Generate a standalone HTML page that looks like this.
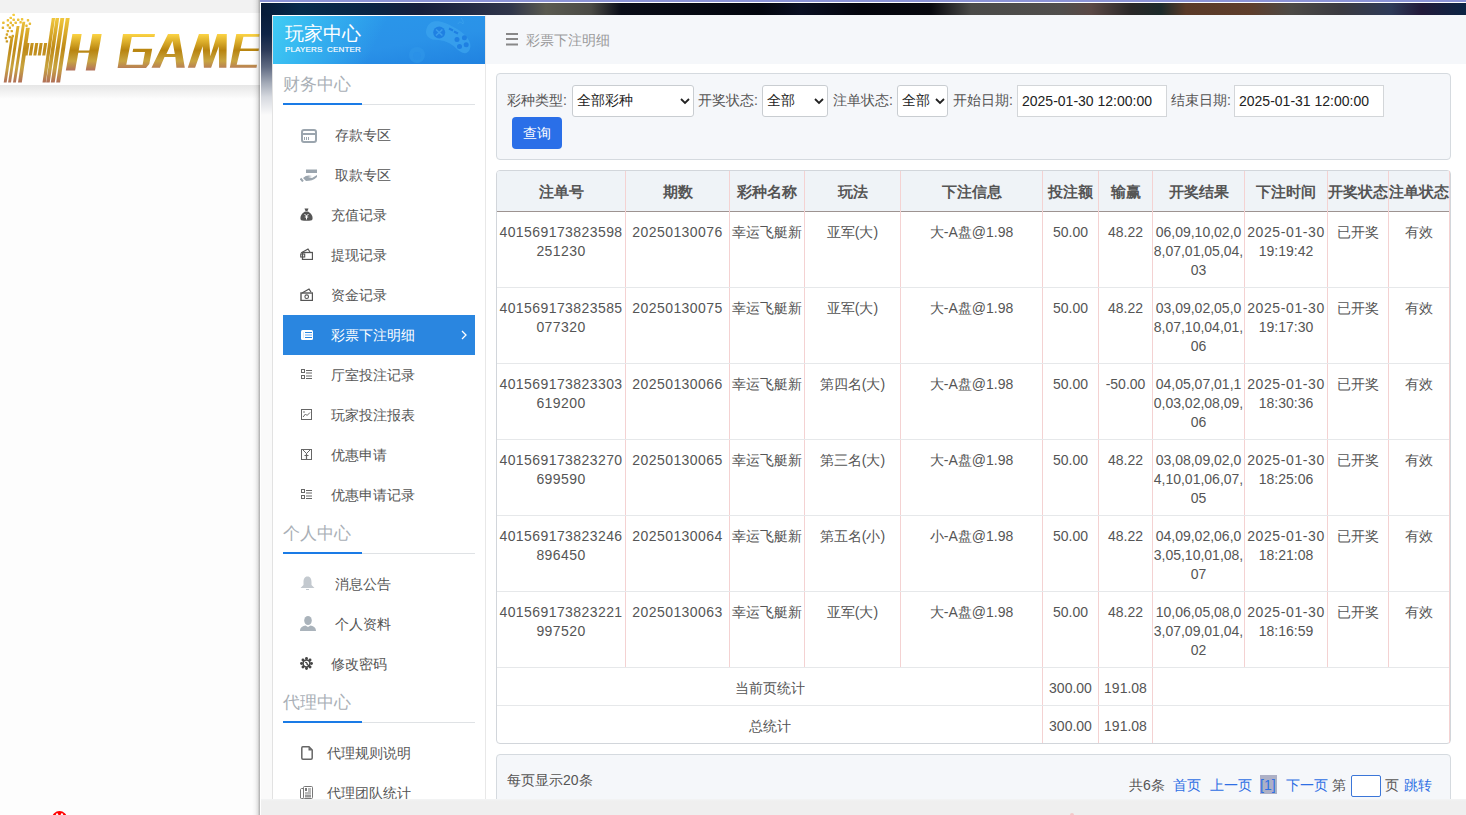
<!DOCTYPE html><html><head><meta charset="utf-8"><style>
*{box-sizing:border-box}
html,body{margin:0;padding:0}
body{width:1466px;height:815px;overflow:hidden;position:relative;background:#fdfdfd;font-family:'Liberation Sans',sans-serif;font-size:14px;color:#555}
.ab{position:absolute}
.t{position:absolute;white-space:nowrap;line-height:20px}
.sec{position:absolute;left:283px;font-size:17px;color:#a9afb6;line-height:24px;white-space:nowrap}
.ul{position:absolute;left:283px;width:192px;height:1px;background:#dfe2e5}
.ulb{position:absolute;left:283px;width:79px;height:2px;background:#1a7be6}
.it{position:absolute;font-size:14px;color:#555;line-height:20px;white-space:nowrap}
.lab{position:absolute;top:90px;line-height:20px;color:#555;white-space:nowrap}
.sel{position:absolute;top:85px;height:32px;background:#fff;border:1px solid #c9cdd1;border-radius:3px}
.sel span{position:absolute;left:4px;top:4px;line-height:20px;color:#222}
.sel svg{position:absolute;top:12px}
.inp{position:absolute;top:85px;height:32px;background:#fff;border:1px solid #d3d6d9}
.inp span{position:absolute;left:4px;top:4.5px;line-height:20px;color:#222}
.cell{position:absolute;text-align:center;line-height:19px;color:#555;white-space:nowrap}
.hd{position:absolute;text-align:center;line-height:20px;color:#555;font-weight:bold;white-space:nowrap;font-size:15px}
.vl{position:absolute;width:1px;background:#f4d2d2}
.hl{position:absolute;height:1px;background:#e6e8ea}
.pg{position:absolute;top:775px;line-height:20px;white-space:nowrap}
.bl{color:#2e6fe4}
.dg{letter-spacing:0.42px}
.dt{letter-spacing:0.6px}
</style></head><body>

<div class="ab" style="left:0;top:0;width:260px;height:13px;background:#f2f2f2"></div>
<div class="ab" style="left:0;top:85px;width:260px;height:14px;background:linear-gradient(#e6e6e6,#fdfdfd)"></div>
<div class="ab" style="left:0;top:13px;width:260px;height:72px;background:#fff"></div>
<svg class="ab" style="left:0;top:13px" width="260" height="72" viewBox="0 13 260 72">
<defs>
<linearGradient id="g1" x1="0" y1="14" x2="0" y2="83" gradientUnits="userSpaceOnUse">
<stop offset="0" stop-color="#f7cf42"/><stop offset="0.5" stop-color="#bf8a17"/><stop offset="0.78" stop-color="#c8a441"/><stop offset="1" stop-color="#b06e58"/></linearGradient>
<linearGradient id="g2" x1="0" y1="34" x2="0" y2="70" gradientUnits="userSpaceOnUse">
<stop offset="0" stop-color="#fcd444"/><stop offset="0.45" stop-color="#b8840f"/><stop offset="0.75" stop-color="#c8a541"/><stop offset="1" stop-color="#b3735a"/></linearGradient>
</defs>
<g fill="url(#g1)"><rect x="12.5" y="13.7" width="2.4" height="2.4" rx="0.6"/><rect x="9.6" y="16.7" width="2.4" height="2.4" rx="0.6"/><rect x="6.7" y="19.1" width="2.4" height="2.4" rx="0.6"/><rect x="12.5" y="18.6" width="2.4" height="2.4" rx="0.6"/><rect x="17.0" y="18.6" width="2.4" height="2.4" rx="0.6"/><rect x="20.9" y="18.1" width="2.4" height="2.4" rx="0.6"/><rect x="26.8" y="19.1" width="2.4" height="2.4" rx="0.6"/><rect x="2.2" y="21.6" width="2.4" height="2.4" rx="0.6"/><rect x="9.6" y="21.6" width="2.4" height="2.4" rx="0.6"/><rect x="14.5" y="21.6" width="2.4" height="2.4" rx="0.6"/><rect x="19.4" y="21.1" width="2.4" height="2.4" rx="0.6"/><rect x="28.7" y="22.5" width="2.4" height="2.4" rx="0.6"/><rect x="6.7" y="24.0" width="2.4" height="2.4" rx="0.6"/><rect x="11.6" y="24.0" width="2.4" height="2.4" rx="0.6"/><rect x="1.7" y="26.5" width="2.4" height="2.4" rx="0.6"/><rect x="8.6" y="26.5" width="2.4" height="2.4" rx="0.6"/><rect x="25.3" y="24.5" width="2.4" height="2.4" rx="0.6"/><rect x="6.7" y="29.9" width="2.4" height="2.4" rx="0.6"/><rect x="10.6" y="29.9" width="2.4" height="2.4" rx="0.6"/><rect x="5.7" y="33.3" width="2.4" height="2.4" rx="0.6"/><rect x="11.6" y="34.8" width="2.4" height="2.4" rx="0.6"/><rect x="4.7" y="36.8" width="2.4" height="2.4" rx="0.6"/><rect x="8.6" y="35.8" width="2.4" height="2.4" rx="0.6"/><rect x="5.7" y="40.2" width="2.4" height="2.4" rx="0.6"/><polygon points="10.6,36.5 13.5,36.5 6.6,82.6 3.7,82.6"/><polygon points="16.6,26 19.5,26 11.0,82.6 8.1,82.6"/><polygon points="22.4,21.8 25.3,21.8 15.9,82.6 13.0,82.6"/><polygon points="26.0,27.7 29.8,27.7 21.8,82.6 18.0,82.6"/><polygon points="51.8,17.9 55.1,17.9 45.8,82.6 42.5,82.6"/><polygon points="55.6,17.9 59.2,17.9 49.7,82.6 46.1,82.6"/><polygon points="60.4,17.9 64.3,17.9 54.7,82.6 50.8,82.6"/><polygon points="65.8,17.9 69.7,17.9 60.1,82.6 56.2,82.6"/><polygon points="26.4,42.9 29.5,42.9 27.6,55.6 24.5,55.6"/><polygon points="30.7,42.9 33.8,42.9 31.900000000000002,55.6 28.8,55.6"/><polygon points="35.199999999999996,42.9 38.3,42.9 36.4,55.6 33.3,55.6"/><polygon points="39.6,42.9 42.7,42.9 40.800000000000004,55.6 37.7,55.6"/><polygon points="44.1,42.9 47.2,42.9 45.300000000000004,55.6 42.2,55.6"/></g>
<g fill="url(#g2)" fill-rule="evenodd">
<polygon points="72.4,34 81.7,34 75.1,70.6 65.8,70.6"/>
<polygon points="92.4,34 101.7,34 95,70.6 85.7,70.6"/>
<polygon points="78,50.6 94,50.6 93.6,52.8 77.6,52.8"/>
<polygon points="123,34 155,34 154.5,37 131.8,37 126.3,64.8 142.6,64.8 145,52 132.6,52 133.2,48.8 152.2,48.8 149.3,64 146,67.9 117.6,67.9"/>
<path d="M168,34.1 L179,34.1 L184.8,67.7 L176.4,67.7 L175.4,57 L164.5,57 L159.9,67.7 L151.5,67.7 Z M172.5,41 L174.8,54 L166.4,54 Z"/>
<polygon points="198.9,34.1 208.8,34.1 210.4,56.3 217.2,34.1 226.8,34.1 226.4,67.7 219.1,67.7 218.8,46.3 211.1,67.7 203.9,67.7 202.7,46.3 195.1,67.7 187.8,67.7"/>
<polygon points="236.3,34.1 259.6,34.1 259.2,36.8 243.4,36.8 240.6,48.6 258.9,48.6 258.6,50.9 240,50.9 236.7,64.7 257,64.7 256.5,67.7 229.8,67.7"/>
</g>
</svg>
<div class="ab" style="left:52px;top:811px;width:15px;height:15px;border-radius:8px;background:#f00"></div>
<svg class="ab" style="left:52px;top:811px" width="15" height="15"><path d="M4.5 2.5 L7.5 7.5 M10.5 2.5 L7.5 7.5" stroke="#fff" stroke-width="2"/></svg>
<div class="ab" style="left:252px;top:0;width:8px;height:815px;background:linear-gradient(to right,rgba(0,0,0,0),rgba(0,0,0,0.03) 40%,rgba(0,0,0,0.1) 70%,rgba(0,0,0,0.32))"></div>
<div class="ab" style="left:260px;top:0;width:1206px;height:815px;background:#fff"></div>
<div class="ab" style="left:260px;top:0;width:1206px;height:2px;background:#8b93d6"></div>
<div class="ab" style="left:261px;top:3px;width:1205px;height:796px;background:#fafafa"></div>
<div class="ab" style="left:261px;top:3px;width:1205px;height:12px;background:linear-gradient(to right,#071a38 0px,#062a4a 40px,#0a2444 110px,#161e3c 160px,#30364a 250px,#5a5a50 285px,#4a4a45 330px,#0a0d18 360px,#03060e 500px,#0a0f22 540px,#04050d 600px,#08090f 670px,#4a4a48 710px,#504e4c 800px,#5a4845 830px,#2a2828 870px,#1c2a2a 900px,#5a3a28 925px,#5e3e2c 990px,#4c4a46 1030px,#3a3a40 1080px,#2e3a58 1130px,#221a3a 1160px,#0a2444 1205px)"></div>
<div class="ab" style="left:261px;top:15px;width:11px;height:100px;background:linear-gradient(#081c3a 0px,#0e2446 19px,#2c3a58 35px,#5f6a82 52px,#a3aab7 68px,#d6d9df 82px,#fafafa 100px)"></div>
<div class="ab" style="left:261px;top:799px;width:1205px;height:16px;background:#eeeeee"></div>
<div class="ab" style="left:272px;top:15px;width:214px;height:784px;background:#fff;border-left:1px solid #e2e2e2;border-right:1px solid #e8e8e8;border-top:1px solid #fff"></div>
<div class="ab" style="left:273px;top:16px;width:212px;height:48px;background:linear-gradient(170deg,#2a98ea 0%,#2a92e8 60%,#2082e0 100%);overflow:hidden">
<div class="ab" style="left:0;top:0;width:213px;height:48px;background:linear-gradient(115deg,#40ccf4 0px,#36b6f0 40px,rgba(42,150,234,0) 105px)"></div>
<svg class="ab" style="left:0;top:0" width="213" height="48" viewBox="0 0 213 48">
<g transform="rotate(24 176 21)">
<path d="M152 21 C152 10 165 9 176 10 C190 11 200 16 200 24 C200 31 193 31 186 28 C180 26 172 26 165 29 C157 32 152 28 152 21Z" fill="#3ba3ee" opacity="0.75"/>
</g>
<circle cx="166.2" cy="16.5" r="6" fill="#1f80e2"/>
<path d="M163 13.5 L169.4 19.5 M169.4 13.5 L163 19.5" stroke="#3a9cec" stroke-width="1.6"/>
<path d="M176 12.5 L180 14.5 M181 15.5 L185 17.5" stroke="#1f80e2" stroke-width="2.2"/>
<circle cx="191.4" cy="21.7" r="2.5" fill="#1f80e2"/><circle cx="184" cy="23.6" r="2.5" fill="#1f80e2"/>
<circle cx="193.2" cy="28.8" r="2.5" fill="#1f80e2"/><circle cx="186.5" cy="30.6" r="2.5" fill="#1f80e2"/>
<path d="M185 8 C186 5 188 6 190 8 C191 6 189 3 188 2" stroke="#3ba3ee" stroke-width="1" fill="none" opacity="0.8"/>
<circle cx="144" cy="39" r="8" fill="#3097ea" opacity="0.6"/><circle cx="144" cy="40" r="4" fill="#2a90e8" opacity="0.6"/>
</svg>
<div class="t" style="left:12px;top:6px;font-size:19px;line-height:23px;color:#fff">玩家中心</div>
<div class="t" style="left:12px;top:29px;font-size:8px;line-height:10px;color:#fff;letter-spacing:0.15px;-webkit-text-stroke:0.15px #fff">PLAYERS&nbsp; CENTER</div>
</div>
<div class="sec" style="top:73px">财务中心</div>
<div class="ul" style="top:104px"></div>
<div class="ulb" style="top:103px"></div>
<div class="sec" style="top:522px">个人中心</div>
<div class="ul" style="top:553px"></div>
<div class="ulb" style="top:552px"></div>
<div class="sec" style="top:691px">代理中心</div>
<div class="ul" style="top:722px"></div>
<div class="ulb" style="top:721px"></div>
<div class="ab" style="left:283px;top:315px;width:192px;height:40px;background:#2a86e0"></div>
<div class="it" style="left:335px;top:125px;color:#555">存款专区</div>
<svg class="ab" style="left:301px;top:129px" width="16" height="14" viewBox="0 0 16 14"><rect x="1" y="1" width="14" height="12" rx="2" fill="none" stroke="#9ba5ae" stroke-width="2"/><rect x="1" y="4" width="14" height="2" fill="#9ba5ae"/><rect x="3" y="8" width="1" height="3" fill="#9ba5ae"/><rect x="5" y="8" width="1" height="3" fill="#9ba5ae"/><rect x="7" y="8" width="1" height="3" fill="#9ba5ae"/></svg>
<div class="it" style="left:335px;top:165px;color:#555">取款专区</div>
<svg class="ab" style="left:300px;top:169px" width="18" height="13" viewBox="0 0 18 13"><rect x="6" y="0.5" width="11" height="3.5" fill="#9ba5ae"/><path d="M3 9 C6 6 9 6 12 7 L8 8 L12 9 L17 6 L17 8 C14 11 10 12 6 12 Z" fill="#9ba5ae"/><path d="M0.5 9.5 L3 12.5" stroke="#9ba5ae" stroke-width="2"/></svg>
<div class="it" style="left:331px;top:205px;color:#555">充值记录</div>
<svg class="ab" style="left:300px;top:208px" width="13" height="13" viewBox="0 0 13 13"><path d="M4.5 0.5 L8.5 0.5 L7.5 3 L5.5 3 Z" fill="#555"/><path d="M5 3.5 L8 3.5 C11 5 13 8 12.5 11 C12 12.5 11 12.8 6.5 12.8 C2 12.8 1 12.5 0.5 11 C0 8 2 5 5 3.5Z" fill="#555"/><path d="M4.5 6 L6.5 8 L8.5 6 M6.5 8 L6.5 11.5 M4.8 9 L8.2 9" stroke="#fff" stroke-width="1" fill="none"/></svg>
<div class="it" style="left:331px;top:245px;color:#555">提现记录</div>
<svg class="ab" style="left:300px;top:248px" width="13" height="12" viewBox="0 0 13 12"><path d="M1 5 L8 1 L10 4" stroke="#555" stroke-width="1.2" fill="none"/><rect x="2.5" y="4.5" width="10" height="7" fill="none" stroke="#555" stroke-width="1.3"/><rect x="0.7" y="6" width="4" height="3" fill="none" stroke="#555" stroke-width="1.1"/></svg>
<div class="it" style="left:331px;top:285px;color:#555">资金记录</div>
<svg class="ab" style="left:300px;top:288px" width="13" height="13" viewBox="0 0 13 13"><path d="M2 5 L9 1 L11 4" stroke="#555" stroke-width="1.3" fill="none"/><rect x="1" y="5" width="11.5" height="7.5" fill="none" stroke="#555" stroke-width="1.4"/><circle cx="6.7" cy="8.7" r="1.8" fill="none" stroke="#555" stroke-width="1.1"/></svg>
<div class="it" style="left:331px;top:325px;color:#fff">彩票下注明细</div>
<svg class="ab" style="left:301px;top:330px" width="12" height="10" viewBox="0 0 12 10"><rect x="0" y="0" width="12" height="10" rx="1.5" fill="#fff"/><rect x="4" y="2" width="7" height="1" fill="#2a86e0"/><rect x="4" y="4.5" width="7" height="1" fill="#6aaaf0"/><rect x="4" y="7" width="7" height="1" fill="#2a86e0"/><rect x="2" y="2" width="1" height="6" fill="#d8e8fa"/></svg>
<div class="it" style="left:331px;top:365px;color:#555">厅室投注记录</div>
<svg class="ab" style="left:301px;top:369px" width="11" height="11" viewBox="0 0 11 11"><rect x="0.5" y="0.5" width="3" height="3" fill="none" stroke="#666" stroke-width="1"/><rect x="0.5" y="6.5" width="3" height="3" fill="none" stroke="#666" stroke-width="1"/><rect x="5" y="1" width="6" height="1" fill="#666"/><rect x="5" y="3.5" width="6" height="1" fill="#666"/><rect x="5" y="6.5" width="6" height="1" fill="#666"/><rect x="5" y="9" width="6" height="1" fill="#666"/></svg>
<div class="it" style="left:331px;top:405px;color:#555">玩家投注报表</div>
<svg class="ab" style="left:301px;top:409px" width="11" height="11" viewBox="0 0 11 11"><rect x="0.5" y="0.5" width="10" height="10" fill="none" stroke="#666" stroke-width="1"/><path d="M2 8 L4.5 5 L6 6.5 L9 3.5" stroke="#666" stroke-width="1" fill="none"/><circle cx="3" cy="3" r="0.8" fill="#666"/></svg>
<div class="it" style="left:331px;top:445px;color:#555">优惠申请</div>
<svg class="ab" style="left:301px;top:449px" width="11" height="11" viewBox="0 0 11 11"><rect x="0.5" y="0.5" width="10" height="10" fill="none" stroke="#666" stroke-width="1"/><path d="M2 1 L5.5 4.5 L9 1" stroke="#666" stroke-width="1" fill="none"/><path d="M5.5 4.5 L5.5 10 M3.5 6.5 L7.5 6.5" stroke="#666" stroke-width="1.2"/></svg>
<div class="it" style="left:331px;top:485px;color:#555">优惠申请记录</div>
<svg class="ab" style="left:301px;top:489px" width="11" height="11" viewBox="0 0 11 11"><rect x="0.5" y="0.5" width="3" height="3" fill="none" stroke="#666" stroke-width="1"/><rect x="0.5" y="6.5" width="3" height="3" fill="none" stroke="#666" stroke-width="1"/><rect x="5" y="1" width="6" height="1" fill="#666"/><rect x="5" y="3.5" width="6" height="1" fill="#666"/><rect x="5" y="6.5" width="6" height="1" fill="#666"/><rect x="5" y="9" width="6" height="1" fill="#666"/></svg>
<div class="it" style="left:335px;top:574px;color:#555">消息公告</div>
<svg class="ab" style="left:300px;top:576px" width="15" height="14" viewBox="0 0 15 14"><path d="M7.5 0.5 C10.5 0.5 11.5 3 11.5 6 L11.5 9 L14.5 12 L0.5 12 L3.5 9 L3.5 6 C3.5 3 4.5 0.5 7.5 0.5Z" fill="#c3c9cf"/><rect x="6" y="13" width="3" height="1" fill="#c3c9cf"/></svg>
<div class="it" style="left:335px;top:614px;color:#555">个人资料</div>
<svg class="ab" style="left:300px;top:616px" width="16" height="15" viewBox="0 0 16 15"><ellipse cx="8" cy="4.5" rx="3.8" ry="4.5" fill="#aab3bb"/><path d="M0 15 C0 11 3 10 5.5 9.5 L8 11 L10.5 9.5 C13 10 16 11 16 15Z" fill="#aab3bb"/></svg>
<div class="it" style="left:331px;top:654px;color:#555">修改密码</div>
<svg class="ab" style="left:300px;top:657px" width="13" height="13" viewBox="0 0 13 13"><circle cx="11.50" cy="6.50" r="1.45" fill="#444"/><circle cx="10.04" cy="10.04" r="1.45" fill="#444"/><circle cx="6.50" cy="11.50" r="1.45" fill="#444"/><circle cx="2.96" cy="10.04" r="1.45" fill="#444"/><circle cx="1.50" cy="6.50" r="1.45" fill="#444"/><circle cx="2.96" cy="2.96" r="1.45" fill="#444"/><circle cx="6.50" cy="1.50" r="1.45" fill="#444"/><circle cx="10.04" cy="2.96" r="1.45" fill="#444"/><circle cx="6.5" cy="6.5" r="3.4" fill="#fff" stroke="#444" stroke-width="1.5"/><path d="M5.2 5.6 C6.2 5 7.4 6 7 7 L9.3 9.3" stroke="#444" stroke-width="1.3" fill="none"/></svg>
<div class="it" style="left:327px;top:743px;color:#555">代理规则说明</div>
<svg class="ab" style="left:301px;top:746px" width="12" height="14" viewBox="0 0 12 14"><path d="M1.8 0.8 L8 0.8 L11.2 4 L11.2 12 C11.2 12.8 10.8 13.2 10 13.2 L2 13.2 C1.2 13.2 0.8 12.8 0.8 12 L0.8 2 C0.8 1.2 1.2 0.8 1.8 0.8Z" fill="none" stroke="#666" stroke-width="1.5"/><path d="M7.5 1 L11 4.5 L7.5 4.5Z" fill="#666"/></svg>
<div class="it" style="left:327px;top:783px;color:#555">代理团队统计</div>
<svg class="ab" style="left:300px;top:786px" width="13" height="13" viewBox="0 0 13 13"><rect x="3.5" y="0.5" width="9" height="12" rx="1" fill="none" stroke="#777" stroke-width="1"/><path d="M3.5 2.5 L1.5 2.5 C1 2.5 0.5 3 0.5 3.5 L0.5 12 C0.5 12.5 1 12.5 1.5 12.5 L3.5 12.5" fill="none" stroke="#777" stroke-width="1"/><rect x="5" y="2" width="2" height="3" fill="#777"/><rect x="8" y="2.5" width="3" height="1" fill="#777"/><rect x="8" y="4.5" width="3" height="1" fill="#777"/><rect x="5" y="6.5" width="6" height="1" fill="#777"/><rect x="5" y="8.5" width="6" height="3" fill="#999"/></svg>
<svg class="ab" style="left:460px;top:330px" width="8" height="10"><path d="M2 1 L6 5 L2 9" stroke="#fff" stroke-width="1.3" fill="none"/></svg>
<div class="ab" style="left:486px;top:15px;width:980px;height:49px;background:#f5f7fa"></div>
<div class="ab" style="left:486px;top:64px;width:980px;height:735px;background:#fff"></div>
<svg class="ab" style="left:506px;top:33px" width="12" height="13"><rect x="0" y="0" width="12" height="2" fill="#888"/><rect x="0" y="5" width="12" height="2" fill="#888"/><rect x="0" y="10.5" width="12" height="2" fill="#888"/></svg>
<div class="t" style="left:526px;top:30px;color:#9a9a9a">彩票下注明细</div>
<div class="ab" style="left:496px;top:73px;width:955px;height:87px;background:#f5f7fa;border:1px solid #d5dadf;border-radius:4px"></div>
<div class="lab" style="left:507px">彩种类型:</div>
<div class="sel" style="left:572px;width:122px"><span>全部彩种</span><svg style="left:107px" width="10" height="7" viewBox="0 0 10 7"><path d="M1 1 L5 5 L9 1" stroke="#222" stroke-width="1.8" fill="none"/></svg></div>
<div class="lab" style="left:698px">开奖状态:</div>
<div class="sel" style="left:762px;width:66px"><span>全部</span><svg style="left:51px" width="10" height="7" viewBox="0 0 10 7"><path d="M1 1 L5 5 L9 1" stroke="#222" stroke-width="1.8" fill="none"/></svg></div>
<div class="lab" style="left:833px">注单状态:</div>
<div class="sel" style="left:897px;width:51px"><span>全部</span><svg style="left:37px" width="10" height="7" viewBox="0 0 10 7"><path d="M1 1 L5 5 L9 1" stroke="#222" stroke-width="1.8" fill="none"/></svg></div>
<div class="lab" style="left:953px">开始日期:</div>
<div class="inp" style="left:1017px;width:150px"><span>2025-01-30 12:00:00</span></div>
<div class="lab" style="left:1171px">结束日期:</div>
<div class="inp" style="left:1234px;width:150px"><span>2025-01-31 12:00:00</span></div>
<div class="ab" style="left:512px;top:117px;width:50px;height:32px;background:#2a6fe8;border-radius:4px;color:#fff;text-align:center;line-height:32px">查询</div>
<div class="ab" style="left:496px;top:170px;width:955px;height:574px;background:#fff;border:1px solid #d2d6db;border-radius:4px"></div>
<div class="ab" style="left:497px;top:171px;width:953px;height:40px;background:#eff3f7;border-radius:3px 3px 0 0"></div>
<div class="ab" style="left:497px;top:211px;width:953px;height:1px;background:#9d9391"></div>
<div class="vl" style="left:625px;top:171px;height:497px"></div>
<div class="vl" style="left:729px;top:171px;height:497px"></div>
<div class="vl" style="left:804px;top:171px;height:497px"></div>
<div class="vl" style="left:900px;top:171px;height:497px"></div>
<div class="vl" style="left:1042px;top:171px;height:497px"></div>
<div class="vl" style="left:1098px;top:171px;height:497px"></div>
<div class="vl" style="left:1152px;top:171px;height:497px"></div>
<div class="vl" style="left:1244px;top:171px;height:497px"></div>
<div class="vl" style="left:1327px;top:171px;height:497px"></div>
<div class="vl" style="left:1388px;top:171px;height:497px"></div>
<div class="vl" style="left:1449px;top:171px;height:497px"></div>
<div class="vl" style="left:1042px;top:668px;height:75px"></div>
<div class="vl" style="left:1098px;top:668px;height:75px"></div>
<div class="vl" style="left:1152px;top:668px;height:75px"></div>
<div class="vl" style="left:1449px;top:668px;height:75px"></div>
<div class="hl" style="left:497px;top:287px;width:952px"></div>
<div class="hl" style="left:497px;top:363px;width:952px"></div>
<div class="hl" style="left:497px;top:439px;width:952px"></div>
<div class="hl" style="left:497px;top:515px;width:952px"></div>
<div class="hl" style="left:497px;top:591px;width:952px"></div>
<div class="hl" style="left:497px;top:667px;width:952px"></div>
<div class="hl" style="left:497px;top:705px;width:952px"></div>
<div class="hd" style="left:497px;top:182px;width:128px">注单号</div>
<div class="hd" style="left:626px;top:182px;width:103px">期数</div>
<div class="hd" style="left:730px;top:182px;width:74px">彩种名称</div>
<div class="hd" style="left:805px;top:182px;width:95px">玩法</div>
<div class="hd" style="left:901px;top:182px;width:141px">下注信息</div>
<div class="hd" style="left:1043px;top:182px;width:55px">投注额</div>
<div class="hd" style="left:1099px;top:182px;width:53px">输赢</div>
<div class="hd" style="left:1153px;top:182px;width:91px">开奖结果</div>
<div class="hd" style="left:1245px;top:182px;width:82px">下注时间</div>
<div class="hd" style="left:1328px;top:182px;width:60px">开奖状态</div>
<div class="hd" style="left:1389px;top:182px;width:60px">注单状态</div>
<div class="cell" style="left:497px;top:223px;width:128px"><span class="dg">401569173823598</span><br><span class="dg">251230</span></div>
<div class="cell" style="left:626px;top:223px;width:103px"><span class="dg">20250130076</span></div>
<div class="cell" style="left:730px;top:223px;width:74px">幸运飞艇新</div>
<div class="cell" style="left:805px;top:223px;width:95px">亚军(大)</div>
<div class="cell" style="left:901px;top:223px;width:141px">大-A盘@1.98</div>
<div class="cell" style="left:1043px;top:223px;width:55px">50.00</div>
<div class="cell" style="left:1099px;top:223px;width:53px">48.22</div>
<div class="cell" style="left:1153px;top:223px;width:91px">06,09,10,02,0<br>8,07,01,05,04,<br>03</div>
<div class="cell" style="left:1245px;top:223px;width:82px"><span class="dt">2025-01-30</span><br>19:19:42</div>
<div class="cell" style="left:1328px;top:223px;width:60px">已开奖</div>
<div class="cell" style="left:1389px;top:223px;width:60px">有效</div>
<div class="cell" style="left:497px;top:299px;width:128px"><span class="dg">401569173823585</span><br><span class="dg">077320</span></div>
<div class="cell" style="left:626px;top:299px;width:103px"><span class="dg">20250130075</span></div>
<div class="cell" style="left:730px;top:299px;width:74px">幸运飞艇新</div>
<div class="cell" style="left:805px;top:299px;width:95px">亚军(大)</div>
<div class="cell" style="left:901px;top:299px;width:141px">大-A盘@1.98</div>
<div class="cell" style="left:1043px;top:299px;width:55px">50.00</div>
<div class="cell" style="left:1099px;top:299px;width:53px">48.22</div>
<div class="cell" style="left:1153px;top:299px;width:91px">03,09,02,05,0<br>8,07,10,04,01,<br>06</div>
<div class="cell" style="left:1245px;top:299px;width:82px"><span class="dt">2025-01-30</span><br>19:17:30</div>
<div class="cell" style="left:1328px;top:299px;width:60px">已开奖</div>
<div class="cell" style="left:1389px;top:299px;width:60px">有效</div>
<div class="cell" style="left:497px;top:375px;width:128px"><span class="dg">401569173823303</span><br><span class="dg">619200</span></div>
<div class="cell" style="left:626px;top:375px;width:103px"><span class="dg">20250130066</span></div>
<div class="cell" style="left:730px;top:375px;width:74px">幸运飞艇新</div>
<div class="cell" style="left:805px;top:375px;width:95px">第四名(大)</div>
<div class="cell" style="left:901px;top:375px;width:141px">大-A盘@1.98</div>
<div class="cell" style="left:1043px;top:375px;width:55px">50.00</div>
<div class="cell" style="left:1099px;top:375px;width:53px">-50.00</div>
<div class="cell" style="left:1153px;top:375px;width:91px">04,05,07,01,1<br>0,03,02,08,09,<br>06</div>
<div class="cell" style="left:1245px;top:375px;width:82px"><span class="dt">2025-01-30</span><br>18:30:36</div>
<div class="cell" style="left:1328px;top:375px;width:60px">已开奖</div>
<div class="cell" style="left:1389px;top:375px;width:60px">有效</div>
<div class="cell" style="left:497px;top:451px;width:128px"><span class="dg">401569173823270</span><br><span class="dg">699590</span></div>
<div class="cell" style="left:626px;top:451px;width:103px"><span class="dg">20250130065</span></div>
<div class="cell" style="left:730px;top:451px;width:74px">幸运飞艇新</div>
<div class="cell" style="left:805px;top:451px;width:95px">第三名(大)</div>
<div class="cell" style="left:901px;top:451px;width:141px">大-A盘@1.98</div>
<div class="cell" style="left:1043px;top:451px;width:55px">50.00</div>
<div class="cell" style="left:1099px;top:451px;width:53px">48.22</div>
<div class="cell" style="left:1153px;top:451px;width:91px">03,08,09,02,0<br>4,10,01,06,07,<br>05</div>
<div class="cell" style="left:1245px;top:451px;width:82px"><span class="dt">2025-01-30</span><br>18:25:06</div>
<div class="cell" style="left:1328px;top:451px;width:60px">已开奖</div>
<div class="cell" style="left:1389px;top:451px;width:60px">有效</div>
<div class="cell" style="left:497px;top:527px;width:128px"><span class="dg">401569173823246</span><br><span class="dg">896450</span></div>
<div class="cell" style="left:626px;top:527px;width:103px"><span class="dg">20250130064</span></div>
<div class="cell" style="left:730px;top:527px;width:74px">幸运飞艇新</div>
<div class="cell" style="left:805px;top:527px;width:95px">第五名(小)</div>
<div class="cell" style="left:901px;top:527px;width:141px">小-A盘@1.98</div>
<div class="cell" style="left:1043px;top:527px;width:55px">50.00</div>
<div class="cell" style="left:1099px;top:527px;width:53px">48.22</div>
<div class="cell" style="left:1153px;top:527px;width:91px">04,09,02,06,0<br>3,05,10,01,08,<br>07</div>
<div class="cell" style="left:1245px;top:527px;width:82px"><span class="dt">2025-01-30</span><br>18:21:08</div>
<div class="cell" style="left:1328px;top:527px;width:60px">已开奖</div>
<div class="cell" style="left:1389px;top:527px;width:60px">有效</div>
<div class="cell" style="left:497px;top:603px;width:128px"><span class="dg">401569173823221</span><br><span class="dg">997520</span></div>
<div class="cell" style="left:626px;top:603px;width:103px"><span class="dg">20250130063</span></div>
<div class="cell" style="left:730px;top:603px;width:74px">幸运飞艇新</div>
<div class="cell" style="left:805px;top:603px;width:95px">亚军(大)</div>
<div class="cell" style="left:901px;top:603px;width:141px">大-A盘@1.98</div>
<div class="cell" style="left:1043px;top:603px;width:55px">50.00</div>
<div class="cell" style="left:1099px;top:603px;width:53px">48.22</div>
<div class="cell" style="left:1153px;top:603px;width:91px">10,06,05,08,0<br>3,07,09,01,04,<br>02</div>
<div class="cell" style="left:1245px;top:603px;width:82px"><span class="dt">2025-01-30</span><br>18:16:59</div>
<div class="cell" style="left:1328px;top:603px;width:60px">已开奖</div>
<div class="cell" style="left:1389px;top:603px;width:60px">有效</div>
<div class="cell" style="left:497px;top:679px;width:545px">当前页统计</div>
<div class="cell" style="left:1043px;top:679px;width:55px">300.00</div>
<div class="cell" style="left:1099px;top:679px;width:53px">191.08</div>
<div class="cell" style="left:497px;top:717px;width:545px">总统计</div>
<div class="cell" style="left:1043px;top:717px;width:55px">300.00</div>
<div class="cell" style="left:1099px;top:717px;width:53px">191.08</div>
<div class="ab" style="left:496px;top:754px;width:955px;height:70px;background:#f5f7fa;border:1px solid #d5dadf;border-radius:4px"></div>
<div class="t" style="left:507px;top:770px">每页显示20条</div>
<div class="pg" style="left:1129px">共6条</div>
<div class="pg bl" style="left:1173px">首页</div>
<div class="pg bl" style="left:1210px">上一页</div>
<div class="ab" style="left:1260px;top:775px;width:17px;height:19px;background:#adb0c6"></div>
<div class="pg bl" style="left:1260px">[1]</div>
<div class="pg bl" style="left:1286px">下一页</div>
<div class="pg" style="left:1332px">第</div>
<div class="ab" style="left:1351px;top:775px;width:30px;height:22px;background:#fff;border:1px solid #3b76d8;border-radius:2px"></div>
<div class="pg" style="left:1385px">页</div>
<div class="pg bl" style="left:1404px">跳转</div>
<div class="ab" style="left:261px;top:799px;width:1205px;height:16px;background:linear-gradient(#f3f4f5 0px,#efefef 2px,#efefef 16px)"></div>
<div class="ab" style="left:1070px;top:813px;width:4px;height:2px;border-radius:2px 2px 0 0;background:#f3c9c9"></div>
</body></html>
